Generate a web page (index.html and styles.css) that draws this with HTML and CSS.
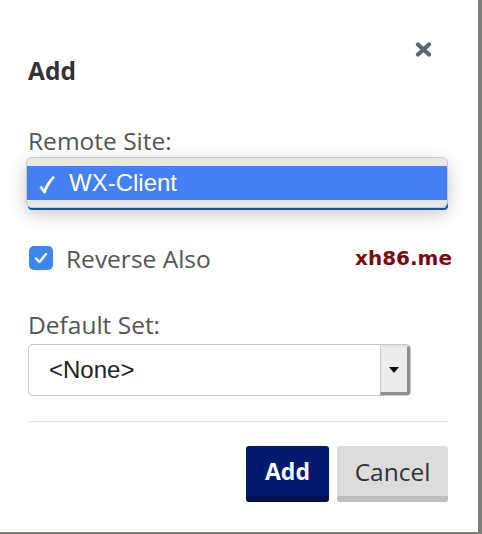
FILE: index.html
```html
<!DOCTYPE html>
<html lang="en">
<head>
  <meta charset="UTF-8" />
  <meta name="viewport" content="width=device-width, initial-scale=1.0"/>
  <title>Add Remote Site</title>
  <link rel="stylesheet" href="styles.css">
</head>
<body>

<div class="modal">
  <div class="modal-header">
    <h2 class="modal-title">Add</h2>
    <button class="close-btn" type="button" aria-label="Close">
      <svg width="17" height="15" viewBox="0 0 17 15">
        <path d="M3 2.5 L14 12.5 M14 2.5 L3 12.5" stroke="#5b6570" stroke-width="4.2" stroke-linecap="round"/>
      </svg>
    </button>
  </div>

  <form id="addSite">
    <label class="field-label">Remote Site:</label>
    <div class="site-select">
      <div class="popup">
        <div class="popup-item">
          <svg class="tick" width="16" height="18" viewBox="0 0 16 18">
            <path d="M1.5 10.5 L5.5 16 C7.5 10 10.5 5 15 1" fill="none" stroke="#fff" stroke-width="2.8" stroke-linejoin="round"/>
          </svg>
          WX-Client
        </div>
      </div>
    </div>

    <div class="check-row">
      <span class="checkbox">
        <svg width="14" height="12" viewBox="0 0 14 12">
          <path d="M2 6.5 L5.5 10 L12 2" fill="none" stroke="#fff" stroke-width="2.4" stroke-linecap="round" stroke-linejoin="round"/>
        </svg>
      </span>
      <span class="check-label">Reverse Also</span>
      <span class="watermark">xh86.me</span>
    </div>

    <label class="field-label set-label">Default Set:</label>
    <div class="set-select">
      <span class="set-value">&lt;None&gt;</span>
      <span class="set-arrow"></span>
    </div>

    <hr class="divider">

    <div class="actions">
      <button type="submit" class="btn btn-primary">Add</button>
      <button type="button" class="btn btn-default">Cancel</button>
    </div>
  </form>
</div>

</body>
</html>
```

FILE: styles.css
```css
body {
  margin: 0;
  background-color: #7f7f7a;
  font-family: "Open Sans", Arial, sans-serif;
}
.modal {
  width: 478px;
  height: 532px;
  box-sizing: border-box;
  background: #fff;
  padding: 0 30px 0 28px;
}
.modal-header {
  display: flex;
  justify-content: space-between;
  align-items: flex-start;
}
.modal-title {
  margin: 55px 0 0;
  font-size: 24.5px;
  line-height: 32px;
  font-weight: bold;
  color: #333;
}
.close-btn {
  margin: 42px 16px 0 0;
  padding: 0;
  border: none;
  background: none;
  width: 17px;
  height: 15px;
  display: block;
}
.close-btn svg {
  display: block;
}
.field-label {
  display: block;
  margin-top: 38px;
  font-size: 24.5px;
  line-height: 32px;
  color: #555;
}
.site-select {
  position: relative;
  margin-top: 7px;
  height: 46px;
  box-sizing: border-box;
  border: 2px solid #1a62b5;
  border-radius: 4px;
  background: #fff;
}
.popup {
  position: absolute;
  left: -4px;
  top: -9px;
  right: -2px;
  height: 51px;
  box-sizing: border-box;
  background: #e7e7e7;
  border: 1px solid #c9c9c9;
  border-radius: 6px;
  padding-top: 8px;
  box-shadow: 0 6px 18px rgba(0, 0, 0, 0.22);
}
.popup-item {
  height: 34px;
  background: #4280f4;
  color: #fff;
  font-family: "Liberation Sans", Arial, sans-serif;
  font-size: 24px;
  line-height: 34px;
  padding-left: 12px;
  display: flex;
  align-items: center;
}
.tick {
  margin: 3px 14px 0 0;
}
.check-row {
  display: flex;
  align-items: center;
  height: 32px;
  margin-top: 32px;
}
.checkbox {
  width: 24px;
  height: 24px;
  margin-left: 1px;
  border-radius: 5px;
  background: #3b86f0;
  display: flex;
  align-items: center;
  justify-content: center;
}
.check-label {
  margin-left: 13px;
  font-size: 24.5px;
  color: #555;
}
.watermark {
  margin-left: auto;
  margin-right: -4px;
  font-family: "DejaVu Sans", sans-serif;
  font-weight: bold;
  font-size: 20px;
  color: #7d0a0a;
}
.set-label {
  margin-top: 35px;
}
.set-select {
  margin-top: 3px;
  width: 383px;
  height: 52px;
  box-sizing: border-box;
  border: 1px solid #c8c8c8;
  border-radius: 4px;
  display: flex;
  align-items: stretch;
  overflow: hidden;
}
.set-value {
  flex: 1;
  padding-left: 20px;
  font-family: "Liberation Sans", Arial, sans-serif;
  font-size: 24px;
  line-height: 50px;
  color: #222;
}
.set-arrow {
  width: 30px;
  box-sizing: border-box;
  background: #ececec;
  border-style: solid;
  border-width: 2px 3px 3px 1px;
  border-color: #e2e2e2 #8f8f8f #8f8f8f #c9c9c9;
  display: flex;
  align-items: center;
  justify-content: center;
}
.set-arrow::after {
  content: "";
  border-left: 5px solid transparent;
  border-right: 5px solid transparent;
  border-top: 6px solid #111;
}
.divider {
  margin: 25px 0 0;
  border: none;
  border-top: 1px solid #e2e2dc;
}
.actions {
  margin-top: 24px;
  display: flex;
  justify-content: flex-end;
  gap: 8px;
}
.btn {
  height: 56px;
  border: none;
  border-radius: 3px;
  font-family: "Open Sans", Arial, sans-serif;
  font-size: 24.5px;
  padding: 0;
  cursor: pointer;
}
.btn-primary {
  width: 83px;
  background: #001a6e;
  border-bottom: 6px solid #00114a;
  color: #fff;
  font-weight: bold;
  font-size: 23px;
}
.btn-default {
  width: 111px;
  background: #dcdcdc;
  border-bottom: 6px solid #bfbfbf;
  color: #333;
}
```
